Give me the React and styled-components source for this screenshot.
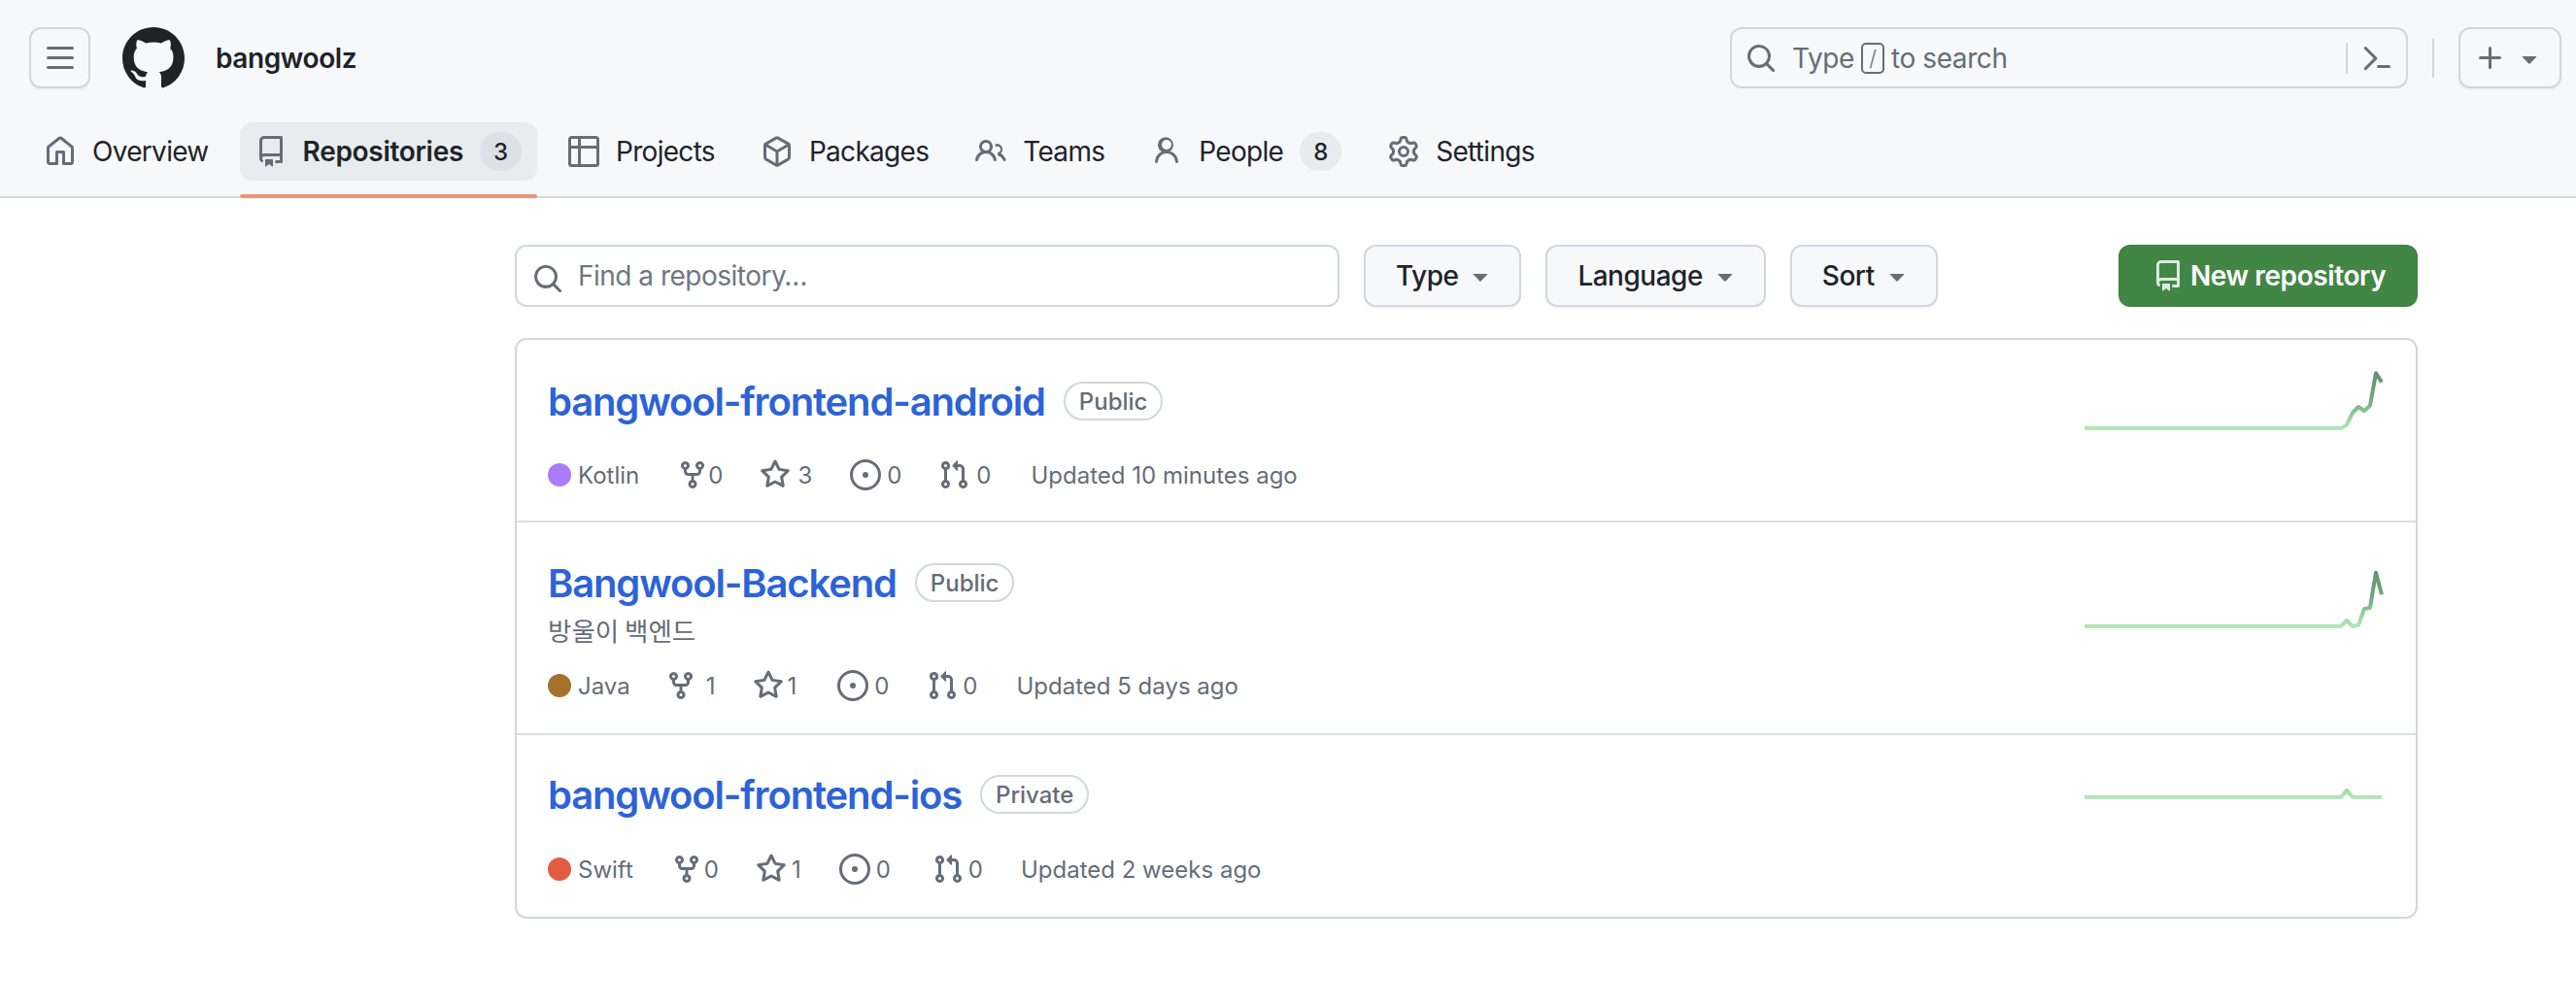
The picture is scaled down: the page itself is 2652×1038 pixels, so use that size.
import React from "react";
import styled, { createGlobalStyle } from "styled-components";

const P = {
  bars: "M1 2.75A.75.75 0 0 1 1.75 2h12.5a.75.75 0 0 1 0 1.5H1.75A.75.75 0 0 1 1 2.75Zm0 5A.75.75 0 0 1 1.75 7h12.5a.75.75 0 0 1 0 1.5H1.75A.75.75 0 0 1 1 7.75ZM1.75 12h12.5a.75.75 0 0 1 0 1.5H1.75a.75.75 0 0 1 0-1.5Z",
  mark: "M8 0c4.42 0 8 3.58 8 8a8.013 8.013 0 0 1-5.45 7.59c-.4.08-.55-.17-.55-.38 0-.27.01-1.13.01-2.2 0-.75-.25-1.23-.54-1.48 1.78-.2 3.65-.88 3.65-3.95 0-.88-.31-1.59-.82-2.15.08-.2.36-1.02-.08-2.12 0 0-.67-.22-2.2.82-.64-.18-1.32-.27-2-.27-.68 0-1.36.09-2 .27-1.53-1.03-2.2-.82-2.2-.82-.44 1.1-.16 1.92-.08 2.12-.51.56-.82 1.28-.82 2.15 0 3.06 1.86 3.75 3.64 3.95-.23.2-.44.55-.51 1.07-.46.21-1.61.55-2.33-.66-.15-.24-.6-.83-1.23-.82-.67.01-.27.38.01.53.34.19.73.9.82 1.13.16.45.68 1.31 2.69.94 0 .67.01 1.3.01 1.49 0 .21-.15.45-.55.38A7.995 7.995 0 0 1 0 8c0-4.42 3.58-8 8-8Z",
  home: "M6.906.664a1.749 1.749 0 0 1 2.187 0l5.25 4.2c.415.332.657.835.657 1.367v7.019A1.75 1.75 0 0 1 13.25 15h-3.5a.75.75 0 0 1-.75-.75V9H7v5.25a.75.75 0 0 1-.75.75h-3.5A1.75 1.75 0 0 1 1 13.25V6.23c0-.531.242-1.034.657-1.366l5.25-4.2Zm1.25 1.171a.25.25 0 0 0-.312 0l-5.25 4.2a.25.25 0 0 0-.094.196v7.019c0 .138.112.25.25.25H5.5V8.25a.75.75 0 0 1 .75-.75h3.5a.75.75 0 0 1 .75.75v5.25h2.75a.25.25 0 0 0 .25-.25V6.23a.25.25 0 0 0-.094-.195Z",
  repo: "M2 2.5A2.5 2.5 0 0 1 4.5 0h8.75a.75.75 0 0 1 .75.75v12.5a.75.75 0 0 1-.75.75h-2.5a.75.75 0 0 1 0-1.5h1.75v-2h-8a1 1 0 0 0-.714 1.7.75.75 0 1 1-1.072 1.05A2.495 2.495 0 0 1 2 11.5Zm10.5-1h-8a1 1 0 0 0-1 1v6.708A2.486 2.486 0 0 1 4.5 9h8ZM5 12.25a.25.25 0 0 1 .25-.25h3.5a.25.25 0 0 1 .25.25v3.25a.25.25 0 0 1-.4.2l-1.45-1.087a.249.249 0 0 0-.3 0L5.4 15.7a.25.25 0 0 1-.4-.2Z",
  table: "M0 1.75C0 .784.784 0 1.75 0h12.5C15.216 0 16 .784 16 1.75v12.5A1.75 1.75 0 0 1 14.25 16H1.75A1.75 1.75 0 0 1 0 14.25ZM6.5 6.5v8h7.75a.25.25 0 0 0 .25-.25V6.5Zm8-1.5V1.75a.25.25 0 0 0-.25-.25H6.5V5Zm-13 1.5v7.75c0 .138.112.25.25.25H5v-8ZM5 5V1.5H1.75a.25.25 0 0 0-.25.25V5Z",
  pack: "m8.878.392 5.25 3.045c.54.314.872.89.872 1.514v6.098a1.75 1.75 0 0 1-.872 1.514l-5.25 3.045a1.75 1.75 0 0 1-1.756 0l-5.25-3.045A1.75 1.75 0 0 1 1 11.049V4.951c0-.624.332-1.201.872-1.514L7.122.392a1.75 1.75 0 0 1 1.756 0ZM7.875 1.69l-4.63 2.685L8 7.133l4.755-2.758-4.63-2.685a.248.248 0 0 0-.25 0ZM2.5 5.677v5.372c0 .09.047.171.125.216l4.625 2.683V8.432Zm6.25 8.271 4.625-2.683a.25.25 0 0 0 .125-.216V5.677L8.75 8.432Z",
  people: "M2 5.5a3.5 3.5 0 1 1 5.898 2.549 5.508 5.508 0 0 1 3.034 4.084.75.75 0 1 1-1.482.235 4 4 0 0 0-7.9 0 .75.75 0 0 1-1.482-.236A5.507 5.507 0 0 1 3.102 8.05 3.493 3.493 0 0 1 2 5.5ZM11 4a3.001 3.001 0 0 1 2.22 5.018 5.01 5.01 0 0 1 2.56 3.012.749.749 0 0 1-.72.97.75.75 0 0 1-.716-.53 3.51 3.51 0 0 0-2.344-2.277.75.75 0 0 1-.53-.717v-.351a.75.75 0 0 1 .474-.696A1.5 1.5 0 0 0 11 5.5.75.75 0 0 1 11 4Zm-5.5-.5a2 2 0 1 0-.001 3.999A2 2 0 0 0 5.5 3.5Z",
  person: "M10.561 8.073a6.005 6.005 0 0 1 3.432 5.142.75.75 0 1 1-1.498.07 4.5 4.5 0 0 0-8.99 0 .75.75 0 1 1-1.498-.07 6.004 6.004 0 0 1 3.431-5.142 3.999 3.999 0 1 1 4.123 0ZM5.5 4.5a2.5 2.5 0 1 0 5 0 2.5 2.5 0 0 0-5 0Z",
  gear: "M8 0a8.2 8.2 0 0 1 .701.031C9.444.095 9.99.645 10.16 1.29l.288 1.107c.018.066.079.158.212.224.231.114.454.243.668.386.123.082.233.09.299.071l1.103-.303c.644-.176 1.392.021 1.82.63.27.385.506.792.704 1.218.315.675.111 1.422-.364 1.891l-.814.806c-.049.048-.098.147-.088.294.016.257.016.515 0 .772-.01.147.038.246.088.294l.814.806c.475.469.679 1.216.364 1.891a7.977 7.977 0 0 1-.704 1.217c-.428.61-1.176.807-1.82.63l-1.102-.302c-.067-.019-.177-.011-.3.071a5.909 5.909 0 0 1-.668.386c-.133.066-.194.158-.211.224l-.29 1.106c-.168.646-.715 1.196-1.458 1.26a8.006 8.006 0 0 1-1.402 0c-.743-.064-1.289-.614-1.458-1.26l-.289-1.106c-.018-.066-.079-.158-.212-.224a5.738 5.738 0 0 1-.668-.386c-.123-.082-.233-.09-.299-.071l-1.103.303c-.644.176-1.392-.021-1.82-.63a8.12 8.12 0 0 1-.704-1.218c-.315-.675-.111-1.422.363-1.891l.815-.806c.05-.048.098-.147.088-.294a6.214 6.214 0 0 1 0-.772c.01-.147-.038-.246-.088-.294l-.815-.806C.635 6.045.431 5.298.746 4.623a7.92 7.92 0 0 1 .704-1.217c.428-.61 1.176-.807 1.82-.63l1.102.302c.067.019.177.011.3-.071.214-.143.437-.272.668-.386.133-.066.194-.158.211-.224l.29-1.106C6.009.645 6.556.095 7.299.03 7.53.01 7.764 0 8 0Zm-.571 1.525c-.036.003-.108.036-.137.146l-.289 1.105c-.147.561-.549.967-.998 1.189-.173.086-.34.183-.5.29-.417.278-.97.423-1.529.27l-1.103-.303c-.109-.03-.175.016-.195.045-.22.312-.412.644-.573.99-.014.031-.021.11.059.19l.815.806c.411.406.562.957.53 1.456a4.709 4.709 0 0 0 0 .582c.032.499-.119 1.05-.53 1.456l-.815.806c-.081.08-.073.159-.059.19.162.346.353.677.573.989.02.03.085.076.195.046l1.102-.303c.56-.153 1.113-.008 1.53.27.161.107.328.204.501.29.447.222.85.629.997 1.189l.289 1.105c.029.109.101.143.137.146a6.6 6.6 0 0 0 1.142 0c.036-.003.108-.036.137-.146l.289-1.105c.147-.561.549-.967.998-1.189.173-.086.34-.183.5-.29.417-.278.97-.423 1.529-.27l1.103.303c.109.029.175-.016.195-.045.22-.313.411-.644.573-.99.014-.031.021-.11-.059-.19l-.815-.806c-.411-.406-.562-.957-.53-1.456a4.709 4.709 0 0 0 0-.582c-.032-.499.119-1.05.53-1.456l.815-.806c.081-.08.073-.159.059-.19a6.464 6.464 0 0 0-.573-.989c-.02-.03-.085-.076-.195-.046l-1.102.303c-.56.153-1.113.008-1.53-.27a4.44 4.44 0 0 0-.501-.29c-.447-.222-.85-.629-.997-1.189l-.289-1.105c-.029-.11-.101-.143-.137-.146a6.6 6.6 0 0 0-1.142 0ZM11 8a3 3 0 1 1-6 0 3 3 0 0 1 6 0ZM9.5 8a1.5 1.5 0 1 0-3.001.001A1.5 1.5 0 0 0 9.5 8Z",
  search: "M10.68 11.74a6 6 0 0 1-7.922-8.982 6 6 0 0 1 8.982 7.922l3.04 3.04a.749.749 0 0 1-.326 1.275.749.749 0 0 1-.734-.215ZM11.5 7a4.499 4.499 0 1 0-8.997 0A4.499 4.499 0 0 0 11.5 7Z",
  palette: "m6.354 8.04-4.773 4.773a.75.75 0 1 0 1.061 1.06L7.945 8.57a.75.75 0 0 0 0-1.06L2.642 2.206a.75.75 0 0 0-1.06 1.061L6.353 8.04ZM8.75 11.5a.75.75 0 0 0 0 1.5h5.5a.75.75 0 0 0 0-1.5h-5.5Z",
  plus: "M7.75 2a.75.75 0 0 1 .75.75V7h4.25a.75.75 0 0 1 0 1.5H8.5v4.25a.75.75 0 0 1-1.5 0V8.5H2.75a.75.75 0 0 1 0-1.5H7V2.75A.75.75 0 0 1 7.75 2Z",
  caret: "m4.427 7.427 3.396 3.396a.25.25 0 0 0 .354 0l3.396-3.396A.25.25 0 0 0 11.396 7H4.604a.25.25 0 0 0-.177.427Z",
  fork: "M5 5.372v.878c0 .414.336.75.75.75h4.5a.75.75 0 0 0 .75-.75v-.878a2.25 2.25 0 1 1 1.5 0v.878a2.25 2.25 0 0 1-2.25 2.25h-1.5v2.128a2.251 2.251 0 1 1-1.5 0V8.5h-1.5A2.25 2.25 0 0 1 3.5 6.25v-.878a2.25 2.25 0 1 1 1.5 0ZM5 3.25a.75.75 0 1 0-1.5 0 .75.75 0 0 0 1.5 0Zm6.75.75a.75.75 0 1 0 0-1.5.75.75 0 0 0 0 1.5Zm-3 8.75a.75.75 0 1 0-1.5 0 .75.75 0 0 0 1.5 0Z",
  star: "M8 .25a.75.75 0 0 1 .673.418l1.882 3.815 4.21.612a.75.75 0 0 1 .416 1.279l-3.046 2.97.719 4.192a.751.751 0 0 1-1.088.791L8 12.347l-3.766 1.98a.75.75 0 0 1-1.088-.79l.72-4.194L.818 6.374a.75.75 0 0 1 .416-1.28l4.21-.611L7.327.668A.75.75 0 0 1 8 .25Zm0 2.445L6.615 5.5a.75.75 0 0 1-.564.41l-3.097.45 2.24 2.184a.75.75 0 0 1 .216.664l-.528 3.084 2.769-1.456a.75.75 0 0 1 .698 0l2.77 1.456-.53-3.084a.75.75 0 0 1 .216-.664l2.24-2.183-3.096-.45a.75.75 0 0 1-.564-.41L8 2.694Z",
  issue: "M8 9.5a1.5 1.5 0 1 0 0-3 1.5 1.5 0 0 0 0 3ZM8 0a8 8 0 1 1 0 16A8 8 0 0 1 8 0ZM1.5 8a6.5 6.5 0 1 0 13 0 6.5 6.5 0 0 0-13 0Z",
  pr: "M1.5 3.25a2.25 2.25 0 1 1 3 2.122v5.256a2.251 2.251 0 1 1-1.5 0V5.372A2.25 2.25 0 0 1 1.5 3.25Zm5.677-.177L9.573.677A.25.25 0 0 1 10 .854V2.5h1A2.5 2.5 0 0 1 13.5 5v5.628a2.251 2.251 0 1 1-1.5 0V5a1 1 0 0 0-1-1h-1v1.646a.25.25 0 0 1-.427.177L7.177 3.427a.25.25 0 0 1 0-.354ZM3.75 2.5a.75.75 0 1 0 0 1.5.75.75 0 0 0 0-1.5Zm0 9.5a.75.75 0 1 0 0 1.5.75.75 0 0 0 0-1.5Zm8.25.75a.75.75 0 1 0 1.5 0 .75.75 0 0 0-1.5 0Z",
};

const Global = createGlobalStyle`
  html, body { margin: 0; padding: 0; background: #fff; }
  body { font-family: Inter, "Noto Sans CJK KR", sans-serif; color: #1f2328; }
  * { box-sizing: border-box; }
`;

const Glyph = styled.svg.attrs(p => ({ viewBox: "0 0 16 16", width: p.$size || 32, height: p.$size || 32, fill: "currentColor" }))`
  display: block;
  flex: none;
  color: ${p => p.$color || "#656d76"};
`;
const Icon = ({ d, size, color }) => (
  <Glyph $size={size} $color={color}><path fillRule="evenodd" d={d} /></Glyph>
);

const Header = styled.header`
  background: #f6f8fa;
  border-bottom: 2px solid #d0d7de;
  height: 204px;
  padding: 28px 15px 0 30px;
`;
const TopBar = styled.div`
  display: flex;
  align-items: center;
  height: 63px;
`;
const IconButton = styled.button`
  width: 63px;
  height: 63px;
  padding: 0;
  display: flex;
  align-items: center;
  justify-content: center;
  background: #f6f8fa;
  border: 2px solid #d0d7de;
  border-radius: 12px;
  box-shadow: 0 2px 0 rgba(31, 35, 40, 0.04);
`;
const Logo = styled.div`
  margin-left: 33px;
`;
const OrgName = styled.span`
  margin-left: 32px;
  font-size: 28px;
  font-weight: 600;
  letter-spacing: -0.4px;
  color: #1f2328;
`;
const SearchBox = styled.div`
  margin-left: auto;
  width: 698px;
  height: 63px;
  display: flex;
  align-items: center;
  padding-left: 14px;
  border: 2px solid #d0d7de;
  border-radius: 12px;
  color: #656d76;
  font-size: 28px;
  letter-spacing: -0.4px;
`;
const SearchText = styled.span`
  margin-left: 16px;
  display: flex;
  align-items: center;
`;
const SlashKey = styled.span`
  display: inline-flex;
  align-items: center;
  justify-content: center;
  width: 24px;
  height: 32px;
  margin: 0 7px;
  border: 2px solid #656d76;
  border-radius: 5px;
  font-size: 22px;
  font-weight: 300;
`;
const SearchDivider = styled.span`
  margin-left: auto;
  width: 2px;
  height: 32px;
  background: #d0d7de;
`;
const PaletteSlot = styled.span`
  margin: 0 14px 0 14px;
`;
const BarDivider = styled.span`
  width: 2px;
  height: 40px;
  margin: 0 25px;
  background: #d0d7de;
`;
const CreateButton = styled(IconButton)`
  width: 106px;
  justify-content: flex-start;
  gap: 8px;
  padding-left: 15px;
`;
const Nav = styled.nav`
  display: flex;
  gap: 16px;
  margin-top: 35px;
`;
const Tab = styled.a`
  position: relative;
  display: flex;
  align-items: center;
  height: 60px;
  padding: 0 16px;
  border-radius: 12px;
  font-size: 28px;
  font-weight: ${p => (p.$active ? 600 : 400)};
  letter-spacing: ${p => (p.$active ? "-0.3px" : "-0.7px")};
  color: #1f2328;
  background: ${p => (p.$active ? "#e9ecef" : "transparent")};
  &::after {
    content: "";
    display: ${p => (p.$active ? "block" : "none")};
    position: absolute;
    left: 0;
    right: 0;
    top: 74px;
    height: 4px;
    border-radius: 2px;
    background: #f2917a;
  }
`;
const TabLabel = styled.span`
  margin-left: 17px;
`;
const Counter = styled.span`
  margin-left: 17px;
  width: 43px;
  height: 40px;
  display: flex;
  align-items: center;
  justify-content: center;
  border-radius: 20px;
  background: rgba(175, 184, 193, 0.2);
  font-size: 24px;
  font-weight: 500;
  letter-spacing: 0;
`;

const Main = styled.main`
  width: 1959px;
  margin: 48px 0 0 530px;
`;
const Filters = styled.div`
  display: flex;
  align-items: center;
  gap: 25px;
  height: 64px;
`;
const FindBox = styled.label`
  width: 849px;
  height: 64px;
  display: flex;
  align-items: center;
  padding-left: 16px;
  border: 2px solid #d0d7de;
  border-radius: 12px;
  background: #fff;
`;
const FindIconSlot = styled.span`
  margin-top: 6px;
`;
const FindInput = styled.input`
  flex: 1;
  margin-left: 15px;
  border: 0;
  outline: 0;
  padding: 0;
  background: transparent;
  font: 400 28px Inter, sans-serif;
  letter-spacing: -0.5px;
  &::placeholder { color: #6e7781; opacity: 1; }
`;
const FilterButton = styled.button`
  height: 64px;
  padding: 0 24px 0 31px;
  display: flex;
  align-items: center;
  background: #f6f8fa;
  border: 2px solid #d0d7de;
  border-radius: 12px;
  box-shadow: 0 2px 0 rgba(31, 35, 40, 0.04);
  font: 500 28px Inter, sans-serif;
  letter-spacing: -0.5px;
  color: #1f2328;
`;
const CaretSlot = styled.span`
  margin-left: 7px;
`;
const NewButton = styled.button`
  margin-left: auto;
  width: 308px;
  height: 64px;
  padding: 0 0 0 33px;
  display: flex;
  align-items: center;
  gap: 7px;
  border: 2px solid #40833f;
  border-radius: 12px;
  background: #428645;
  font: 600 28px Inter, sans-serif;
  letter-spacing: -0.4px;
  color: #fff;
`;

const List = styled.div`
  margin-top: 32px;
  border: 2px solid #d0d7de;
  border-radius: 12px;
`;
const Row = styled.article`
  display: flex;
  justify-content: space-between;
  height: ${p => p.$height}px;
  padding: 0 35px 0 32px;
  & + & { border-top: 2px solid #d8dee4; }
`;
const RowMain = styled.div`
  padding-top: ${p => p.$top}px;
`;
const TitleLine = styled.div`
  display: flex;
  align-items: center;
  gap: 19px;
  height: 48px;
`;
const RepoName = styled.a`
  font-size: 40px;
  font-weight: 600;
  color: #2c63d8;
  letter-spacing: -1.15px;
`;
const Badge = styled.span`
  height: 40px;
  padding: 0 14px;
  display: flex;
  align-items: center;
  border: 2px solid #d0d7de;
  border-radius: 20px;
  font-size: 24px;
  font-weight: 500;
  color: #656d76;
`;
const Description = styled.p`
  margin: 7px 0 0;
  font: 400 26.5px/36px "Noto Sans CJK KR", sans-serif;
  color: #656d76;
`;
const Meta = styled.div`
  display: flex;
  align-items: center;
  height: 36px;
  margin-top: ${p => p.$top}px;
  font-size: 24px;
  color: #656d76;
`;
const LangDot = styled.span`
  width: 24px;
  height: 24px;
  border-radius: 50%;
  background: ${p => p.$color};
  margin-right: 7px;
`;
const Stat = styled.span`
  display: flex;
  align-items: center;
  margin-left: ${p => p.$left}px;
`;
const StatValue = styled.span`
  margin-left: ${p => p.$gap}px;
`;
const Updated = styled.span`
  margin-left: ${p => p.$left}px;
`;
const SparkSvg = styled.svg`
  display: block;
  flex: none;
  overflow: visible;
  margin-top: ${p => p.$top}px;
`;

const Spark = ({ id, top, points }) => (
  <SparkSvg $top={top} width="306" height="72" viewBox="0 0 306 72" fill="none">
    <defs>
      <linearGradient id={id} gradientUnits="userSpaceOnUse" x1="0" y1="66" x2="0" y2="6">
        <stop offset="0" stopColor="#b8e9bb" />
        <stop offset="0.25" stopColor="#8ed094" />
        <stop offset="0.55" stopColor="#6fa67c" />
        <stop offset="1" stopColor="#669170" />
      </linearGradient>
    </defs>
    <polyline points={points} stroke={`url(#${id})`} strokeWidth="4" strokeLinejoin="round" />
  </SparkSvg>
);

const tabs = [
  { icon: P.home, label: "Overview" },
  { icon: P.repo, label: "Repositories", count: 3, active: true },
  { icon: P.table, label: "Projects" },
  { icon: P.pack, label: "Packages" },
  { icon: P.people, label: "Teams" },
  { icon: P.person, label: "People", count: 8 },
  { icon: P.gear, label: "Settings" },
];

const flat = "0,64 264,64";
const repos = [
  {
    name: "bangwool-frontend-android", vis: "Public", height: 186, top: 39, metaTop: 34,
    lang: "Kotlin", color: "#a97bff", sparkTop: 27,
    points: `${flat} 270,60.7 276,48 282,42 288,46 294,40.7 300,7.3 306,16.7`,
    stats: [[39, P.fork, 0, 0], [38, P.star, 7, 3], [39, P.issue, 6, 0], [38, P.pr, 7, 0]],
    updated: "Updated 10 minutes ago", updatedLeft: 41,
  },
  {
    name: "Bangwool-Backend", vis: "Public", height: 219, top: 38, metaTop: 21, desc: "방울이 백엔드",
    lang: "Java", color: "#a5722c", sparkTop: 43,
    points: `${flat} 270,58 276,64 282,62.7 288,46 294,44.7 300,8.7 306,31.3`,
    stats: [[36, P.fork, 10, 1], [39, P.star, 3, 1], [42, P.issue, 6, 0], [39, P.pr, 5, 0]],
    updated: "Updated 5 days ago", updatedLeft: 40,
  },
  {
    name: "bangwool-frontend-ios", vis: "Private", height: 189, top: 37, metaTop: 35,
    lang: "Swift", color: "#e05d44", sparkTop: 0,
    points: `${flat} 270,57 276,64 306,64`,
    stats: [[39, P.fork, 2, 0], [38, P.star, 5, 1], [39, P.issue, 6, 0], [43, P.pr, 5, 0]],
    updated: "Updated 2 weeks ago", updatedLeft: 39,
  },
];

export default function App() {
  return (
    <>
      <Global />
      <Header>
        <TopBar>
          <IconButton aria-label="Menu"><Icon d={P.bars} /></IconButton>
          <Logo><Icon d={P.mark} size={64} color="#1f2328" /></Logo>
          <OrgName>bangwoolz</OrgName>
          <SearchBox>
            <Icon d={P.search} />
            <SearchText>Type<SlashKey>/</SlashKey>to search</SearchText>
            <SearchDivider />
            <PaletteSlot><Icon d={P.palette} /></PaletteSlot>
          </SearchBox>
          <BarDivider />
          <CreateButton aria-label="Create">
            <Icon d={P.plus} />
            <Icon d={P.caret} />
          </CreateButton>
        </TopBar>
        <Nav>
          {tabs.map(t => (
            <Tab key={t.label} $active={t.active}>
              <Icon d={t.icon} />
              <TabLabel>{t.label}</TabLabel>
              {t.count != null && <Counter>{t.count}</Counter>}
            </Tab>
          ))}
        </Nav>
      </Header>
      <Main>
        <Filters>
          <FindBox>
            <FindIconSlot><Icon d={P.search} /></FindIconSlot>
            <FindInput placeholder="Find a repository…" />
          </FindBox>
          {["Type", "Language", "Sort"].map(label => (
            <FilterButton key={label}>
              {label}
              <CaretSlot><Icon d={P.caret} /></CaretSlot>
            </FilterButton>
          ))}
          <NewButton><Icon d={P.repo} color="#dfe9e0" />New repository</NewButton>
        </Filters>
        <List>
          {repos.map((r, i) => (
            <Row key={r.name} $height={r.height}>
              <RowMain $top={r.top}>
                <TitleLine>
                  <RepoName>{r.name}</RepoName>
                  <Badge>{r.vis}</Badge>
                </TitleLine>
                {r.desc && <Description>{r.desc}</Description>}
                <Meta $top={r.metaTop}>
                  <LangDot $color={r.color} />
                  {r.lang}
                  {r.stats.map(([left, icon, gap, value], k) => (
                    <Stat key={k} $left={left}>
                      <Icon d={icon} />
                      <StatValue $gap={gap}>{value}</StatValue>
                    </Stat>
                  ))}
                  <Updated $left={r.updatedLeft}>{r.updated}</Updated>
                </Meta>
              </RowMain>
              <Spark id={`spark-${i}`} top={r.sparkTop} points={r.points} />
            </Row>
          ))}
        </List>
      </Main>
    </>
  );
}
